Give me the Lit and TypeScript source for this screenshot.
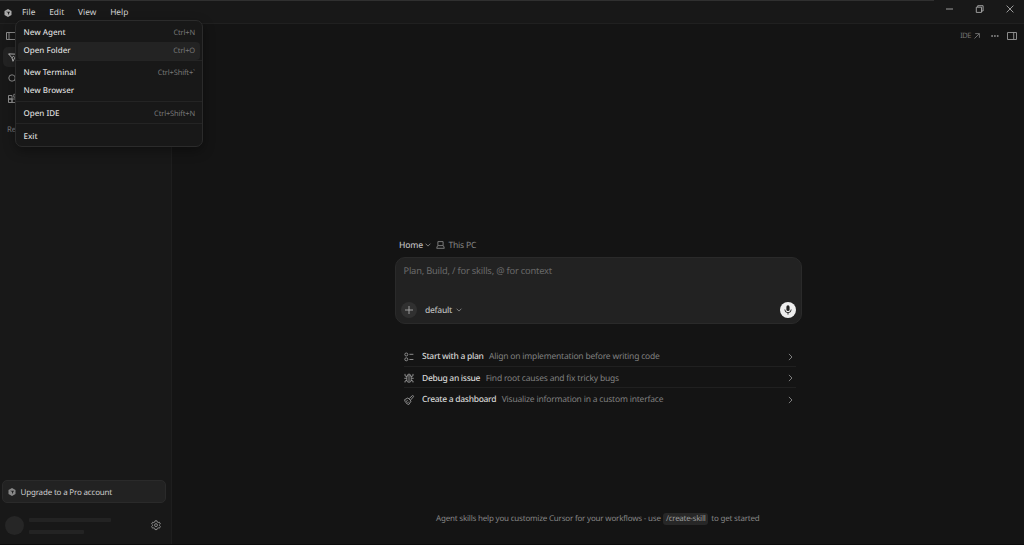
import { LitElement, html, css, svg } from "lit";
import { customElement } from "lit/decorators.js";

const icon = (w: number, h: number, vw: number, vh: number, body: unknown, cls = "") =>
  html`<svg class="ic ${cls}" width=${w} height=${h} viewBox="0 0 ${vw} ${vh}">${body}</svg>`;

const cube = (s: number) =>
  icon(s, s, 16, 16, svg`<path class="solid" fill-rule="evenodd" d="M8 .2 15 4V12L8 15.800 1 12V4ZM4 5.400 8 7.600V12.400L12 5.400Z"/>`);
const chevronDown = icon(6, 4, 6, 4, svg`<path d="M.6.7 3 3.1 5.4.7"/>`);
const chevronRight = icon(5, 8, 5, 8, svg`<path d="M.9.9 4 4 .9 7.1"/>`, "go");
const laptop = icon(9, 8, 9, 8, svg`<path d="M1.900.6h5.200v4H1.900zM1.500 4.700.7 7.300h7.600L7.500 4.700"/>`);
const planIcon = icon(10, 10, 10, 10, svg`<circle cx="2.300" cy="2.500" r="1.500"/><circle cx="2.300" cy="7.300" r="1.500"/><path d="M5.400 2.300h4M5.400 7.500h4"/>`);
const bugIcon = icon(10, 10, 10, 10, svg`<path d="M2.800 2.900h4.400v4.200a2.200 2.200 0 0 1-4.400 0zM3.400 2.700a1.600 1.600 0 0 1 3.200 0M5 3.600v5M.3 5.300h2.400M7.300 5.300h2.400M2.800 3.600 1 2.800V.9M7.200 3.600 9 2.800V.9M3 7.300 1 8v1.500M7 7.300 9 8v1.500"/>`);
const brushIcon = icon(10, 10, 10, 10, svg`<path d="M3.900 2.900 7.100 6.100M5.200 3.600 8.300.7C9 .2 9.900 1 9.400 1.800L6.600 5M3.900 2.900.6 4.700c.3 2.300 1.900 4.200 4.200 4.800L7.100 6.100M2 6.500l1.700-1M3.300 8.200l1.600-1.600"/>`);
const gearIcon = icon(10, 10, 24, 24, svg`<path class="w2" d="M9.600 2h4.800l.7 3 2.100 1.200 2.900-.9 2.400 4.200-2.200 2.100v1.800l2.200 2.100-2.400 4.200-2.900-.9-2.100 1.200-.7 3H9.600l-.7-3-2.100-1.200-2.900.9-2.400-4.200 2.200-2.100v-1.800L1.500 9.500l2.400-4.200 2.900.9L8.900 5z"/><circle class="w2" cx="12" cy="12.300" r="3.500"/>`);
const micIcon = icon(10, 10, 10, 10, svg`<rect class="solid" x="3.400" y=".3" width="3.200" height="5.800" rx="1.600"/><path d="M1.800 4.500a3.200 3.200 0 0 0 6.400 0M5 7.700v1.900"/>`);

const MENU: [string, string][][] = [
  [["New Agent", "Ctrl+N"], ["Open Folder", "Ctrl+O"]],
  [["New Terminal", "Ctrl+Shift+`"], ["New Browser", ""]],
  [["Open IDE", "Ctrl+Shift+N"]],
  [["Exit", ""]],
];

const STARTERS = [
  { icon: planIcon, title: "Start with a plan", note: "Align on implementation before writing code" },
  { icon: bugIcon, title: "Debug an issue", note: "Find root causes and fix tricky bugs" },
  { icon: brushIcon, title: "Create a dashboard", note: "Visualize information in a custom interface" },
];

@customElement("app-root")
export class AppRoot extends LitElement {
  static styles = css`
    :host {
      display: block;
      position: relative;
      width: 100%;
      height: 100vh;
      overflow: hidden;
      background: #141414;
      color: #d4d4d4;
      font-family: "Noto Sans", "Open Sans", sans-serif;
      font-size: 8px;
      line-height: 12px;
      text-rendering: geometricPrecision;
      white-space: nowrap;
    }
    * { box-sizing: border-box; }
    .ic { display: block; flex: none; fill: none; stroke: currentColor; stroke-width: .9; overflow: visible; }
    .ic .solid { fill: currentColor; stroke: none; }
    .ic .w2 { stroke-width: 2; }
    .window { display: flex; flex-direction: column; height: 100%; border-bottom: 1px solid #0b0b0b; }
    .titlebar { flex: none; height: 24px; display: flex; align-items: center; background: #181818; border-bottom: 1px solid #202020; padding: 2px 10px 0 4px; color: #aaa; }
    .edge { position: absolute; top: 0; left: 0; width: 934px; height: 1px; background: #303030; }
    .menus { display: flex; margin-left: 10px; gap: 13.800px; color: #d2d2d2; flex: 1; font-size: 8.400px; }
    .controls { display: flex; align-items: center; gap: 22px; margin-top: -7px; }
    .body { flex: 1; display: flex; min-height: 0; }
    .sidebar { width: 172px; flex: none; background: #181818; border-right: 1px solid #1e1e1e; display: flex; flex-direction: column; color: #999; }
    .nav { padding: 5px 0 0 3px; display: flex; flex-direction: column; width: 30px; }
    .nav div { height: 20.500px; padding-left: 5px; display: flex; align-items: center; }
    .nav .first { height: 13px; padding-left: 3px; margin-bottom: 5px; }
    .nav .on { height: 20px; background: #232323; border-radius: 5px; color: #ccc; margin-bottom: 1px; }
    .recent { margin: 15px 0 0 7px; color: #777; font-size: 7.800px; letter-spacing: -.2px; }
    .fill { flex: 1; }
    .upgrade { margin: 0 5px 0 2px; height: 23px; display: flex; align-items: center; gap: 4.500px; padding: 1px 0 0 5px; background: #222; border: 1px solid #2a2a2a; border-radius: 5px; color: #888; }
    .upgrade span { color: #ccc; letter-spacing: -.18px; padding-top: 1px; }
    .account { height: 41px; display: flex; align-items: center; padding: 3px 10px 0 5px; }
    .avatar { width: 19px; height: 19px; border-radius: 50%; background: #262626; margin-right: 5px; }
    .lines { flex: 1; display: flex; flex-direction: column; gap: 8px; padding-top: 1px; }
    .lines i { height: 4px; width: 82px; background: #232323; border-radius: 1px; }
    .lines i + i { width: 55px; }
    .main { flex: 1; display: flex; flex-direction: column; }
    .tools { height: 23px; display: flex; align-items: center; justify-content: flex-end; padding-right: 7px; color: #999; }
    .ide { display: flex; align-items: center; gap: 3px; color: #777; margin-right: 10px; font-size: 7.500px; letter-spacing: -.45px; }
    .dots { margin-right: 9px; margin-left: 1px; }
    .ide + .dots { margin-right: 8px; }
    .center { width: 407px; margin: 190px 0 0 223px; }
    .where { display: flex; align-items: center; height: 15px; padding-left: 4px; color: #858585; font-size: 8.600px; letter-spacing: -.22px; }
    .where b { margin-right: 2.500px; }
    .where .ic + .ic { margin: 0 3px 0 5px; }
    b { font-weight: 500; color: #bbb; }
    .prompt { height: 67px; margin-top: 5px; background: #222; border: 1px solid #2a2a2a; border-radius: 10px; padding: 6px 5px 5px 5px; display: flex; flex-direction: column; justify-content: space-between; }
    .hint { color: #6a6a6a; font-size: 9.300px; line-height: 14px; padding-left: 2.500px; letter-spacing: -.2px; }
    .row { display: flex; align-items: center; color: #888; }
    .plus { width: 16px; height: 16px; border-radius: 50%; background: #303030; color: #aaa; display: grid; place-items: center; margin-right: 8px; }
    .row b { font-size: 8.500px; letter-spacing: -.28px; margin-right: 4px; padding-top: 2px; }
    .mic { width: 16px; height: 16px; border-radius: 50%; background: #eee; color: #222; display: grid; place-items: center; }
    .starters { margin: 21px 6px 0 9px; }
    .starter { height: 21.500px; display: flex; align-items: center; border-bottom: 1px solid #202020; color: #808080; font-size: 8.500px; letter-spacing: -.2px; padding-top: 3px; }
    .starter:last-child { border-color: transparent; }
    .starter .ic { color: #999; }
    .starter b { color: #d6d6d6; margin: 0 5.500px 0 8px; letter-spacing: -.3px; padding-top: 1px; }
    .starter span { flex: 1; padding-top: 1px; }
    .starter .go { color: #888; margin-right: 3px; }
    .tip { margin: auto 0 19px 264px; display: flex; align-items: center; color: #858585; font-size: 8px; height: 13px; letter-spacing: -.2px; white-space: pre; }
    code { font: inherit; letter-spacing: -.3px; color: #999; background: #272727; border-radius: 3px; padding: 0 3px; margin: 0 1px 0 .500px; }
    .menu { position: absolute; left: 15px; top: 20px; width: 188px; height: 127px; border: 1px solid #2b2b2b; border-radius: 7px; background: #181818; padding-top: 2.500px; box-shadow: 0 4px 12px rgba(0, 0, 0, .35); }
    .group { padding: 0 2px; }
    .group + .group { border-top: 1px solid #242424; margin-top: .500px; padding-top: 3px; }
    .item { height: 18.100px; display: flex; align-items: center; justify-content: space-between; padding: 0 5px 0 5.500px; border-radius: 4px; color: #ddd; font-weight: 500; }
    .item.hot { background: #232323; }
    .item kbd { font: inherit; font-weight: 400; font-size: 7.500px; color: #777; letter-spacing: -.15px; }
  `;

  render() {
    return html`
      <div class="window">
        <div class="titlebar">
          ${cube(8)}
          <div class="menus"><span>File</span><span>Edit</span><span>View</span><span>Help</span></div>
          <div class="controls">
            ${icon(8, 8, 8, 8, svg`<path d="M0 4h7"/>`)}
            ${icon(8, 8, 8, 8, svg`<path d="M.3 2.200h5.200v5.200H.3zM1.700 2V.7h5.400V6H5.700"/>`)}
            ${icon(8, 8, 8, 8, svg`<path d="m.6.6 6.800 6.800M7.400.6.6 7.400"/>`)}
          </div>
        </div>
        <div class="body">
          <div class="sidebar">
            <div class="nav">
              <div class="first">${icon(10, 8, 10, 8, svg`<path d="M.5.5h9v7h-9zM3 .5v7"/>`)}</div>
              <div class="on">${icon(9, 9, 9, 9, svg`<path d="M.6.900 8.400 1.200 5 8.300 3.900 4.700zM3.900 4.700l2-1.600"/>`)}</div>
              <div>${icon(9, 9, 9, 9, svg`<circle cx="4" cy="4" r="3.200"/><path d="M6.300 6.300 8.600 8.600"/>`)}</div>
              <div>${icon(9, 9, 9, 9, svg`<path d="M.5 1.500H4V5H.5zM.5 5H4v3.500H.5zM4 5h3.500v3.500H4zM5.800.3h2.900v2.900H5.800z"/>`)}</div>
            </div>
            <div class="recent">Re</div>
            <div class="fill"></div>
            <div class="upgrade">${cube(8)}<span>Upgrade to a Pro account</span></div>
            <div class="account">
              <div class="avatar"></div>
              <div class="lines"><i></i><i></i></div>
              ${gearIcon}
            </div>
          </div>
          <div class="main">
            <div class="tools">
              <div class="ide">IDE ${icon(6, 6, 6, 6, svg`<path d="M.5 5.500 5.300.7M1.200.6h4.200v4.200"/>`)}</div>
              ${icon(8, 2, 8, 2, svg`<path class="solid" d="M.3.200h1.600v1.500H.3zM3.100.200h1.600v1.500H3.100zM5.900.200h1.600v1.500H5.900z"/>`, "dots")}
              ${icon(10, 8, 10, 8, svg`<path d="M.5.5h9v7h-9zM6.700.5v7"/>`)}
            </div>
            <div class="center">
              <div class="where"><b>Home</b>${chevronDown}${laptop}<span>This PC</span></div>
              <div class="prompt">
                <div class="hint">Plan, Build, / for skills, @ for context</div>
                <div class="row">
                  <div class="plus">${icon(8, 8, 8, 8, svg`<path d="M4 0v8M0 4h8"/>`)}</div>
                  <b>default</b>${chevronDown}
                  <div class="fill"></div>
                  <div class="mic">${micIcon}</div>
                </div>
              </div>
              <div class="starters">
                ${STARTERS.map((s) => html`<div class="starter">${s.icon}<b>${s.title}</b><span>${s.note}</span>${chevronRight}</div>`)}
              </div>
            </div>
            <div class="tip">Agent skills help you customize Cursor for your workflows - use <code>/create-skill</code> to get started</div>
          </div>
        </div>
      </div>
      <div class="edge"></div>
      <div class="menu">
        ${MENU.map((g) => html`<div class="group">${g.map(
          ([label, keys]) => html`<div class="item ${label === "Open Folder" ? "hot" : ""}"><span>${label}</span><kbd>${keys}</kbd></div>`
        )}</div>`)}
      </div>
    `;
  }
}
